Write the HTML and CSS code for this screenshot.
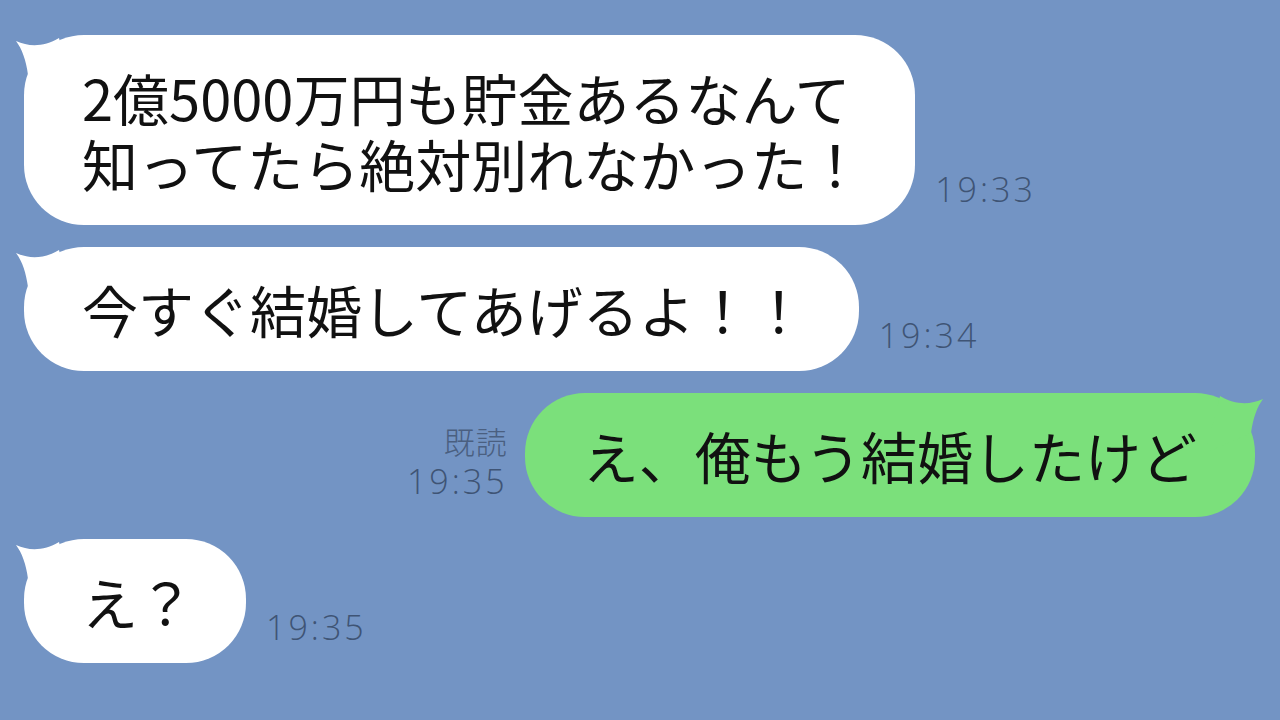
FILE: index.html
```html
<!DOCTYPE html>
<html lang="ja">
<head>
  <meta charset="UTF-8">
  <meta name="viewport" content="width=device-width, initial-scale=1.0">
  <title>トーク</title>
  <link rel="stylesheet" href="styles.css">
</head>
<body>
  <main class="chat">

    <div class="row left">
      <div class="bubble white">
        <svg class="tail" viewBox="0 0 60 60" width="60" height="60"><path d="M2 6 C15 12 30 12 45 3 L60 60 L14 40 C12 25 8 14 2 6 Z"/></svg>
        <p>2億5000万円も貯金あるなんて<br>知ってたら絶対別れなかった！</p>
      </div>
      <div class="meta"><span>19:33</span></div>
    </div>

    <div class="row left">
      <div class="bubble white">
        <svg class="tail" viewBox="0 0 60 60" width="60" height="60"><path d="M2 6 C15 12 30 12 45 3 L60 60 L14 40 C12 25 8 14 2 6 Z"/></svg>
        <p>今すぐ結婚してあげるよ！！</p>
      </div>
      <div class="meta"><span>19:34</span></div>
    </div>

    <div class="row right">
      <div class="meta">
        <span class="read">既読</span>
        <span>19:35</span>
      </div>
      <div class="bubble green">
        <svg class="tail" viewBox="0 0 60 60" width="60" height="60"><path d="M2 6 C15 12 30 12 45 3 L60 60 L14 40 C12 25 8 14 2 6 Z"/></svg>
        <p>え、俺もう結婚したけど</p>
      </div>
    </div>

    <div class="row left">
      <div class="bubble white">
        <svg class="tail" viewBox="0 0 60 60" width="60" height="60"><path d="M2 6 C15 12 30 12 45 3 L60 60 L14 40 C12 25 8 14 2 6 Z"/></svg>
        <p>え？</p>
      </div>
      <div class="meta"><span>19:35</span></div>
    </div>

  </main>
</body>
</html>
```

FILE: styles.css
```css
html, body {
  margin: 0;
  height: 100%;
}

body {
  background-color: #7394c4; /* fondo de la conversación */
  font-family: "Noto Sans CJK JP", "Noto Sans", sans-serif;
  overflow: hidden;
}

.chat {
  display: flex;
  flex-direction: column;
  gap: 22px;
  padding: 35px 25px 0 24px;
}

.row {
  display: flex;
  align-items: flex-end;
  gap: 20px;
}

.row.right {
  justify-content: flex-end;
  gap: 17px;
}

.bubble {
  position: relative;
  border-radius: 60px;
  padding: 29px 52px 29px 58px;
  color: #111;
}

.bubble p {
  position: relative;
  margin: 0;
  font-size: 56px;
  line-height: 66px;
  white-space: nowrap;
}

.bubble.white {
  background-color: #ffffff;
}

.bubble.green {
  background-color: #7be07b;
  padding: 29px 58px 29px 58px;
}

.tail {
  position: absolute;
  top: 0;
  left: -10px;
  overflow: visible;
}

.white .tail path {
  fill: #ffffff;
}

.green .tail {
  left: auto;
  right: -10px;
  transform: scaleX(-1);
}

.green .tail path {
  fill: #7be07b;
}

.meta {
  display: flex;
  flex-direction: column;
  align-items: flex-end;
  padding-bottom: 16px;
  font-family: "Open Sans", "Noto Sans CJK JP", sans-serif;
  font-weight: 300;
  font-size: 34px;
  line-height: 40px;
  letter-spacing: 3px;
  color: #3f5475;
}

.meta .read {
  font-family: "Noto Sans CJK JP", sans-serif;
  font-size: 31px;
  letter-spacing: 1px;
  color: #4a5f80;
}
```
